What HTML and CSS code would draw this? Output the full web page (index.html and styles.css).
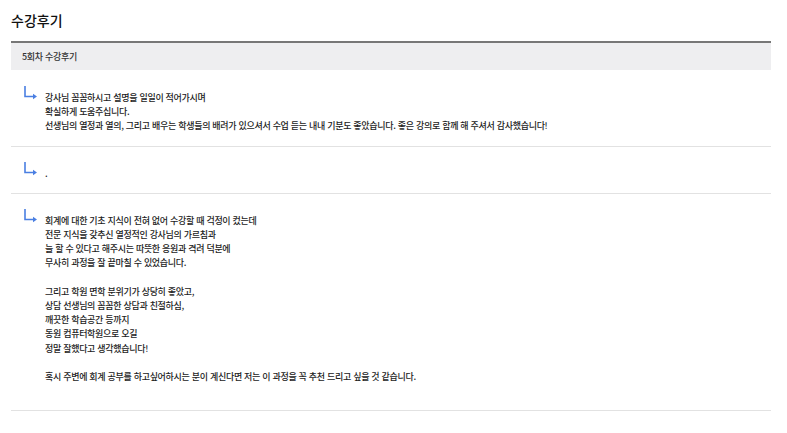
FILE: index.html
```html
<!DOCTYPE html>
<html lang="ko">

<head>
    <meta charset="UTF-8">
    <meta name="viewport" content="width=device-width, initial-scale=1.0">
    <title>수강후기</title>
    <link rel="stylesheet" href="styles.css">
</head>

<body>
    <div class="wrap">
        <h2 class="title">수강후기</h2>

        <div class="board">
            <div class="board-head">5회차 수강후기</div>

            <div class="review">
                <svg class="reply" width="14" height="12" viewBox="0 0 14 12">
                    <path d="M1 0 V10.5 H10" fill="none" stroke="#4a7fe2" stroke-width="1.6" />
                    <path d="M9 7.8 L13 10.5 L9 13.2 Z" fill="#4a7fe2" />
                </svg>
                <p class="text">
                    강사님 꼼꼼하시고 설명을 일일이 적어가시며<br>
                    확실하게 도움주십니다.<br>
                    선생님의 열정과 열의, 그리고 배우는 학생들의 배려가 있으셔서 수업 듣는 내내 기분도 좋았습니다. 좋은 강의로 함께 해 주셔서 감사했습니다!
                </p>
            </div>

            <div class="review">
                <svg class="reply" width="14" height="12" viewBox="0 0 14 12">
                    <path d="M1 0 V10.5 H10" fill="none" stroke="#4a7fe2" stroke-width="1.6" />
                    <path d="M9 7.8 L13 10.5 L9 13.2 Z" fill="#4a7fe2" />
                </svg>
                <p class="text">.</p>
            </div>

            <div class="review">
                <svg class="reply" width="14" height="12" viewBox="0 0 14 12">
                    <path d="M1 0 V10.5 H10" fill="none" stroke="#4a7fe2" stroke-width="1.6" />
                    <path d="M9 7.8 L13 10.5 L9 13.2 Z" fill="#4a7fe2" />
                </svg>
                <p class="text">
                    회계에 대한 기초 지식이 전혀 없어 수강할 때 걱정이 컸는데<br>
                    전문 지식을 갖추신 열정적인 강사님의 가르침과<br>
                    늘 할 수 있다고 해주시는 따뜻한 응원과 격려 덕분에<br>
                    무사히 과정을 잘 끝마칠 수 있었습니다.<br>
                    <br>
                    그리고 학원 면학 분위기가 상당히 좋았고,<br>
                    상담 선생님의 꼼꼼한 상담과 친절하심,<br>
                    깨끗한 학습공간 등까지<br>
                    동원 컴퓨터학원으로 오길<br>
                    정말 잘했다고 생각했습니다!<br>
                    <br>
                    혹시 주변에 회계 공부를 하고싶어하시는 분이 계신다면 저는 이 과정을 꼭 추천 드리고 싶을 것 같습니다.<br>
                    <br>
                </p>
            </div>
        </div>
    </div>
</body>

</html>
```

FILE: styles.css
```css
* {
    margin: 0;
    padding: 0;
    box-sizing: border-box;
}

body {
    background-color: #fff;
    font-family: "Noto Sans CJK KR", "Noto Sans", sans-serif;
    color: #222;
}

.wrap {
    width: 760px;
    margin-left: 11px;
}

.title {
    font-size: 14px;
    font-weight: 500;
    color: #111;
    line-height: 20px;
    padding-top: 10px;
    height: 41px;
}

.board {
    border-top: 2px solid #777;
}

.board-head {
    height: 27px;
    line-height: 27px;
    padding-left: 11px;
    background-color: #eeeef0;
    font-size: 9px;
    font-weight: 500;
    letter-spacing: -0.3px;
    color: #333;
}

.review {
    display: flex;
    align-items: flex-start;
    padding: 15px 0 12px 13px;
    border-bottom: 1px solid #e2e2e2;
}

.board-head + .review {
    padding-top: 16px;
}

.reply {
    flex: none;
    overflow: visible;
    margin-right: 7px;
}

.text {
    margin-top: 5px;
    font-size: 9px;
    font-weight: 500;
    letter-spacing: -0.3px;
    line-height: 14.2px;
    color: #222;
}
```
